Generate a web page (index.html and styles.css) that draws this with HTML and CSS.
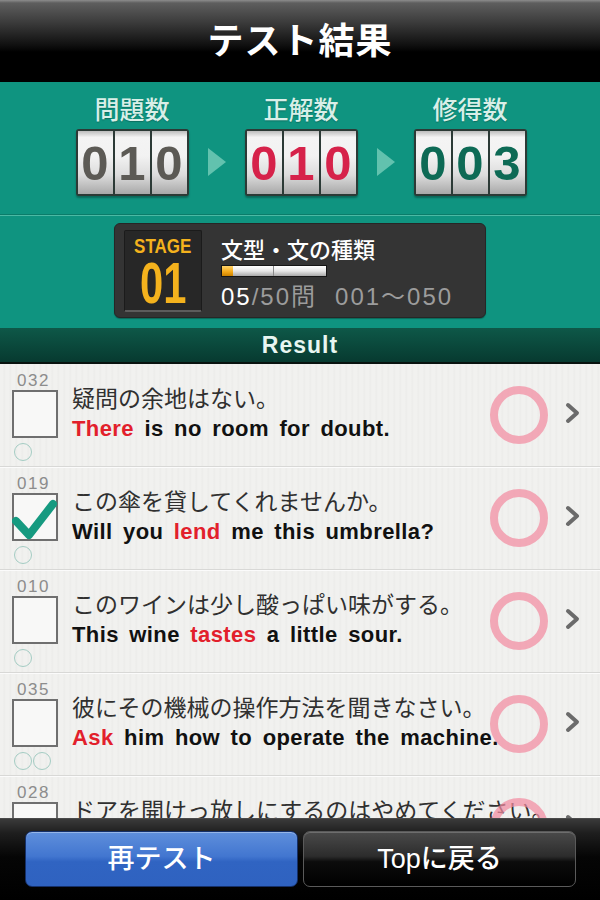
FILE: index.html
```html
<!DOCTYPE html>
<html lang="ja">
<head>
<meta charset="utf-8">
<title>テスト結果</title>
<link rel="stylesheet" href="styles.css">
</head>
<body>
<div class="screen">
  <header class="navbar"><h1 class="nav-title">テスト結果</h1></header>

  <section class="stats">
    <div class="stat">
      <div class="stat-label">問題数</div>
      <div class="counter c-gray"><span class="cell">0</span><span class="cell">1</span><span class="cell">0</span></div>
    </div>
    <div class="arrow"></div>
    <div class="stat">
      <div class="stat-label">正解数</div>
      <div class="counter c-red"><span class="cell">0</span><span class="cell">1</span><span class="cell">0</span></div>
    </div>
    <div class="arrow"></div>
    <div class="stat">
      <div class="stat-label">修得数</div>
      <div class="counter c-green"><span class="cell">0</span><span class="cell">0</span><span class="cell">3</span></div>
    </div>
  </section>

  <section class="stage-area">
    <div class="stage-box">
      <div class="stage-badge">
        <span class="stage-word">STAGE</span>
        <span class="stage-num">01</span>
      </div>
      <div class="stage-info">
        <div class="stage-title">文型・文の種類</div>
        <div class="progress"><div class="progress-fill"></div><div class="progress-split"></div></div>
        <div class="stage-count"><span class="cur">05</span>/50問<span class="range">001〜050</span></div>
      </div>
    </div>
  </section>

  <div class="result-bar">Result</div>

  <div class="list">
    <div class="row">
      <div class="row-left">
        <div class="qnum">032</div>
        <div class="checkbox"></div>
        <div class="marks"><span class="mark"></span></div>
      </div>
      <div class="row-text">
        <div class="ja">疑問の余地はない。</div>
        <div class="en"><span class="hl">There</span> is no room for doubt.</div>
      </div>
      <div class="result-mark"></div>
      <svg class="chev" width="15" height="22" viewBox="0 0 15 22"><path d="M3 3 L12 11 L3 19" fill="none" stroke="#6b6b6b" stroke-width="4" stroke-linecap="round" stroke-linejoin="round"/></svg>
    </div>

    <div class="row">
      <div class="row-left">
        <div class="qnum">019</div>
        <div class="checkbox">
          <svg class="check" width="48" height="50" viewBox="0 0 48 50"><path d="M4 28 L17 42 L41 11" fill="none" stroke="#169a80" stroke-width="8" stroke-linecap="round" stroke-linejoin="round"/></svg>
        </div>
        <div class="marks"><span class="mark"></span></div>
      </div>
      <div class="row-text">
        <div class="ja">この傘を貸してくれませんか。</div>
        <div class="en">Will you <span class="hl">lend</span> me this umbrella?</div>
      </div>
      <div class="result-mark"></div>
      <svg class="chev" width="15" height="22" viewBox="0 0 15 22"><path d="M3 3 L12 11 L3 19" fill="none" stroke="#6b6b6b" stroke-width="4" stroke-linecap="round" stroke-linejoin="round"/></svg>
    </div>

    <div class="row">
      <div class="row-left">
        <div class="qnum">010</div>
        <div class="checkbox"></div>
        <div class="marks"><span class="mark"></span></div>
      </div>
      <div class="row-text">
        <div class="ja">このワインは少し酸っぱい味がする。</div>
        <div class="en">This wine <span class="hl">tastes</span> a little sour.</div>
      </div>
      <div class="result-mark"></div>
      <svg class="chev" width="15" height="22" viewBox="0 0 15 22"><path d="M3 3 L12 11 L3 19" fill="none" stroke="#6b6b6b" stroke-width="4" stroke-linecap="round" stroke-linejoin="round"/></svg>
    </div>

    <div class="row">
      <div class="row-left">
        <div class="qnum">035</div>
        <div class="checkbox"></div>
        <div class="marks"><span class="mark"></span><span class="mark"></span></div>
      </div>
      <div class="row-text">
        <div class="ja">彼にその機械の操作方法を聞きなさい。</div>
        <div class="en"><span class="hl">Ask</span> him how to operate the machine.</div>
      </div>
      <div class="result-mark"></div>
      <svg class="chev" width="15" height="22" viewBox="0 0 15 22"><path d="M3 3 L12 11 L3 19" fill="none" stroke="#6b6b6b" stroke-width="4" stroke-linecap="round" stroke-linejoin="round"/></svg>
    </div>

    <div class="row">
      <div class="row-left">
        <div class="qnum">028</div>
        <div class="checkbox"></div>
      </div>
      <div class="row-text">
        <div class="ja">ドアを開けっ放しにするのはやめてください。</div>
      </div>
      <div class="result-mark"></div>
      <svg class="chev" width="15" height="22" viewBox="0 0 15 22"><path d="M3 3 L12 11 L3 19" fill="none" stroke="#6b6b6b" stroke-width="4" stroke-linecap="round" stroke-linejoin="round"/></svg>
    </div>
  </div>

  <footer class="toolbar">
    <button class="btn btn-blue">再テスト</button>
    <button class="btn btn-dark">Topに戻る</button>
  </footer>
</div>
</body>
</html>
```

FILE: styles.css
```css
* { box-sizing: border-box; }

html, body {
  margin: 0;
  padding: 0;
  background: #000;
}

.screen {
  width: 600px;
  height: 900px;
  display: flex;
  flex-direction: column;
  overflow: hidden;
  font-family: "Noto Sans CJK JP", "Liberation Sans", sans-serif;
}

/* ---------- nav bar ---------- */
.navbar {
  flex: 0 0 82px;
  height: 82px;
  background: linear-gradient(#8c8c8c 0px, #5e5e5e 3px, #3c3c3c 22px, #0e0e0e 46px, #000 52px, #000 100%);
  display: flex;
  align-items: center;
  justify-content: center;
  padding-bottom: 6px;
}

.nav-title {
  margin: 0;
  color: #fff;
  font-size: 36px;
  font-weight: 700;
  line-height: 44px;
  letter-spacing: 1px;
}

/* ---------- stats ---------- */
.stats {
  flex: 0 0 133px;
  height: 133px;
  background: #0f9480;
  display: flex;
  justify-content: center;
  align-items: flex-end;
  gap: 19px;
  padding: 0 0 18px 2px;
  border-bottom: 1px solid #0b7c6a;
}

.stat {
  display: flex;
  flex-direction: column;
  align-items: center;
  gap: 6px;
}

.stat-label {
  color: #d8efe8;
  font-size: 25px;
  line-height: 30px;
  font-weight: 500;
  text-shadow: 0 1px 1px rgba(0, 0, 0, 0.25);
}

.counter {
  display: flex;
  width: 113px;
  height: 67px;
  border: 2px solid #2c3a36;
  border-radius: 3px;
  background: #2c3a36;
  gap: 2px;
  box-shadow: 0 2px 2px rgba(0, 0, 0, 0.3);
}

.cell {
  flex: 1;
  display: flex;
  align-items: center;
  justify-content: center;
  background: linear-gradient(#bdbdbd 0%, #f4f4f4 10%, #f2f2f2 40%, #dcdcdc 70%, #a8a8a8 100%);
  font-family: "Liberation Sans", sans-serif;
  font-weight: 700;
  font-size: 49px;
  line-height: 1;
  padding-top: 2px;
}

.c-gray .cell { color: #5c5a55; }
.c-red .cell { color: #d6224a; }
.c-green .cell { color: #0d6a55; }

.arrow {
  width: 0;
  height: 0;
  border-top: 14px solid transparent;
  border-bottom: 14px solid transparent;
  border-left: 18px solid #62c2ae;
  margin-bottom: 20px;
}

/* ---------- stage ---------- */
.stage-area {
  flex: 0 0 113px;
  height: 113px;
  background: #0f9480;
  border-top: 1px solid #4bb9a4;
  padding-top: 7px;
}

.stage-box {
  width: 372px;
  height: 95px;
  margin: 0 auto;
  background: #343434;
  border: 1px solid #262626;
  border-radius: 6px;
  padding: 6px 9px;
  display: flex;
  box-shadow: 0 1px 1px rgba(0, 0, 0, 0.3);
}

.stage-badge {
  width: 78px;
  height: 82px;
  background: #272727;
  border: 1px solid #1b1b1b;
  border-bottom: 2px solid #5c5c5c;
  border-radius: 2px;
  display: flex;
  flex-direction: column;
  align-items: center;
  padding-top: 6px;
  font-family: "Liberation Sans", sans-serif;
  font-weight: 700;
  color: #f4b21d;
}

.stage-word {
  display: block;
  font-size: 20px;
  line-height: 19px;
  transform: scaleX(0.85);
}

.stage-num {
  display: block;
  font-size: 58px;
  line-height: 54px;
  transform: scaleX(0.72);
}

.stage-info {
  margin-left: 19px;
  padding-top: 4px;
  display: flex;
  flex-direction: column;
  align-items: flex-start;
}

.stage-title {
  color: #fff;
  font-size: 22px;
  line-height: 28px;
  font-weight: 500;
}

.progress {
  margin-top: 3px;
  width: 106px;
  height: 13px;
  border: 1px solid #151515;
  background: linear-gradient(#ffffff 0%, #e6e6e6 50%, #a9a9a9 100%);
  display: flex;
  position: relative;
}

.progress-fill {
  width: 11px;
  height: 100%;
  background: linear-gradient(#ffd36a 0%, #f2a615 60%, #c98100 100%);
}

.progress-split {
  position: absolute;
  left: 51px;
  top: 0;
  bottom: 0;
  width: 1px;
  background: #8a8a8a;
}

.stage-count {
  margin-top: 6px;
  font-family: "Liberation Sans", "Noto Sans CJK JP", sans-serif;
  font-size: 24px;
  line-height: 28px;
  letter-spacing: 2px;
  color: #9c9c9c;
}

.stage-count .cur { color: #fff; }
.stage-count .range { margin-left: 18px; }

/* ---------- result bar ---------- */
.result-bar {
  flex: 0 0 36px;
  height: 36px;
  background: linear-gradient(#0e5848, #073a30);
  border-bottom: 2px solid #08130f;
  color: #e8f6f1;
  font-family: "Liberation Sans", sans-serif;
  font-weight: 700;
  font-size: 23px;
  line-height: 34px;
  letter-spacing: 1px;
  text-align: center;
}

/* ---------- list ---------- */
.list {
  flex: 1 1 auto;
  min-height: 0;
  overflow: hidden;
  background: repeating-linear-gradient(90deg, #f1f1ef 0px, #f1f1ef 3px, #ececea 4px, #f1f1ef 6px);
}

.row {
  height: 103px;
  display: flex;
  align-items: flex-start;
  padding: 0 20px 0 12px;
  border-bottom: 1px solid #d8d8d6;
  box-shadow: 0 1px 0 #fbfbfb;
}

.row-left {
  width: 46px;
  flex: 0 0 46px;
  padding-top: 7px;
  display: flex;
  flex-direction: column;
}

.qnum {
  font-family: "Liberation Sans", sans-serif;
  font-size: 17px;
  line-height: 20px;
  color: #8c8c8c;
  letter-spacing: 1.5px;
  margin-left: 5px;
}

.checkbox {
  width: 46px;
  height: 48px;
  margin-top: -1px;
  border: 2px solid #6f6f6f;
  background: #f8f8f7;
  position: relative;
}

.check {
  position: absolute;
  left: -2px;
  top: -2px;
}

.marks {
  display: flex;
  gap: 1px;
  margin-top: 5px;
  margin-left: 2px;
}

.mark {
  width: 18px;
  height: 18px;
  border: 1.5px solid #a4ccc3;
  border-radius: 50%;
}

.row-text {
  flex: 1 1 auto;
  min-width: 0;
  margin-left: 14px;
  padding-top: 17px;
  white-space: nowrap;
}

.ja {
  font-family: "Noto Sans CJK JP", sans-serif;
  font-size: 23px;
  line-height: 32px;
  color: #303030;
}

.en {
  font-family: "Liberation Sans", sans-serif;
  font-weight: 700;
  font-size: 22px;
  line-height: 32px;
  letter-spacing: 0.4px;
  word-spacing: 4px;
  color: #111;
}

.hl { color: #e2202b; }

.result-mark {
  position: relative;
  flex: 0 0 58px;
  width: 58px;
  height: 58px;
  align-self: center;
  border: 8px solid rgba(243, 140, 161, 0.72);
  border-radius: 50%;
}

.chev {
  flex: 0 0 15px;
  align-self: center;
  margin-left: 17px;
  margin-bottom: 4px;
}

/* ---------- toolbar ---------- */
.toolbar {
  flex: 0 0 82px;
  height: 82px;
  background: linear-gradient(#3a3a3a 0px, #1e1e1e 14px, #050505 38px, #000 100%);
  border-top: 1px solid #4a4a4a;
  display: flex;
  gap: 5px;
  padding: 12px 24px 0 25px;
}

.btn {
  flex: 1;
  height: 56px;
  border-radius: 7px;
  color: #fff;
  font-family: "Liberation Sans", "Noto Sans CJK JP", sans-serif;
  font-size: 27px;
  line-height: 40px;
  font-weight: 500;
  cursor: pointer;
  padding: 0;
  display: flex;
  align-items: center;
  justify-content: center;
}

.btn-blue {
  background: linear-gradient(#5f8fdc 0%, #4276d0 45%, #3064c2 55%, #2f62c0 100%);
  border: 1px solid #15306a;
  box-shadow: inset 0 1px 0 rgba(255, 255, 255, 0.35);
}

.btn-dark {
  background: linear-gradient(#4a4a4a 0%, #2c2c2c 45%, #0c0c0c 55%, #000 100%);
  border: 1px solid #5a5a5a;
  box-shadow: inset 0 1px 0 rgba(255, 255, 255, 0.2);
}
```
